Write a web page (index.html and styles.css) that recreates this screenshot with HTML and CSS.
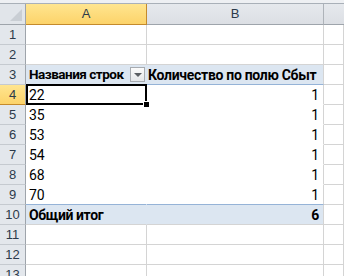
FILE: index.html
```
<html lang="ru">
<head>
  <meta charset="UTF-8">
  <title>Сводная таблица</title>
  <link rel="stylesheet" href="styles.css">
</head>
<body>
  <div class="topbar"></div>
  <div class="sheet">
    <div class="corner"><span class="tri"></span></div>
    <div class="colhead sel">A</div>
    <div class="colhead">B</div>
    <div class="colhead last"></div>

    <div class="rowhead">1</div><div class="cell"></div><div class="cell"></div><div class="cell"></div>
    <div class="rowhead">2</div><div class="cell"></div><div class="cell"></div><div class="cell"></div>

    <div class="rowhead">3</div>
    <div class="cell ph a">
      <span>Названия строк</span>
      <span class="drop"><span class="arrow"></span></span>
    </div>
    <div class="cell ph b"><span>Количество по полю Сбыт</span></div>
    <div class="cell"></div>

    <div class="rowhead sel">4</div><div class="cell pv a active">22</div><div class="cell pv b num">1</div><div class="cell"></div>
    <div class="rowhead">5</div><div class="cell pv a">35</div><div class="cell pv b num">1</div><div class="cell"></div>
    <div class="rowhead">6</div><div class="cell pv a">53</div><div class="cell pv b num">1</div><div class="cell"></div>
    <div class="rowhead">7</div><div class="cell pv a">54</div><div class="cell pv b num">1</div><div class="cell"></div>
    <div class="rowhead">8</div><div class="cell pv a">68</div><div class="cell pv b num">1</div><div class="cell"></div>
    <div class="rowhead">9</div><div class="cell pv a end">70</div><div class="cell pv b num end">1</div><div class="cell"></div>

    <div class="rowhead">10</div><div class="cell tot a">Общий итог</div><div class="cell tot b num">6</div><div class="cell"></div>

    <div class="rowhead">11</div><div class="cell"></div><div class="cell"></div><div class="cell"></div>
    <div class="rowhead">12</div><div class="cell"></div><div class="cell"></div><div class="cell"></div>
    <div class="rowhead">13</div><div class="cell"></div><div class="cell"></div><div class="cell"></div>
  </div>
</body>
</html>
```
FILE: styles.css
```
body {
  margin: 0;
  width: 344px;
  height: 276px;
  overflow: hidden;
  background: #fff;
  font-family: "Liberation Sans", Arial, sans-serif;
  font-size: 13px;
  color: #000;
}
.topbar {
  height: 3px;
  background: #eef0f3;
  border-bottom: 1px solid #a9b0b8;
}
.sheet {
  display: grid;
  grid-template-columns: 26px 121px 177px 20px;
  grid-template-rows: 21px repeat(13, 20px);
}
.sheet > div {
  box-sizing: border-box;
  border-right: 1px solid #d4d4d4;
  border-bottom: 1px solid #d4d4d4;
  white-space: nowrap;
  overflow: visible;
}
.corner {
  position: relative;
  background: #e1e5ea;
  border-right-color: #9ea4ab !important;
  border-bottom-color: #9ea4ab !important;
}
.tri {
  position: absolute;
  right: 3px;
  bottom: 3px;
  width: 0;
  height: 0;
  border-left: 12px solid transparent;
  border-bottom: 12px solid #c9ced4;
}
.colhead {
  background: linear-gradient(#e6e9ed, #dcdfe4);
  border-right-color: #aeb3b9 !important;
  border-bottom-color: #9ea4ab !important;
  text-align: center;
  line-height: 20px;
  color: #2c3a4a;
  font-size: 13px;
}
.colhead.sel {
  background: linear-gradient(#ffe58f, #fcd36a);
  border-right-color: #c48a2c !important;
  border-bottom-color: #c48a2c !important;
  color: #2c3a4a;
}
.colhead.last {
  border-right: none !important;
}
.rowhead {
  background: #e3e7ec;
  border-right-color: #9ea4ab !important;
  border-bottom-color: #c5cad0 !important;
  text-align: center;
  line-height: 20px;
  color: #2c3a4a;
  font-size: 13px;
}
.rowhead.sel {
  background: linear-gradient(#ffe58f, #fcd36a);
  border-bottom-color: #c48a2c !important;
}
.cell {
  line-height: 21px;
  padding: 0 2px;
  font-family: Roboto, "Liberation Sans", sans-serif;
  font-size: 14px;
}
.cell.a {
  padding-left: 3px;
}
.ph {
  background: #dce6f1;
  font-weight: bold;
  letter-spacing: -0.3px;
  border-bottom-color: #95b3d7 !important;
}
.ph.a {
  display: flex;
  justify-content: space-between;
  align-items: center;
  border-right-color: #dce6f1 !important;
  padding-right: 0;
  font-size: 13.5px;
  letter-spacing: -0.5px;
}
.ph.b {
  padding-left: 1px;
}
.drop {
  box-sizing: border-box;
  width: 15px;
  height: 15px;
  border: 1px solid #a7abb0;
  background: linear-gradient(#fbfbfb, #e4e6e9);
  display: flex;
  align-items: center;
  justify-content: center;
  margin-right: 1px;
}
.arrow {
  width: 0;
  height: 0;
  border-left: 4px solid transparent;
  border-right: 4px solid transparent;
  border-top: 4px solid #5a5e63;
}
.pv {
  border-bottom-color: #fff !important;
}
.pv.a {
  border-right-color: #fff !important;
}
.pv.end {
  border-bottom-color: #95b3d7 !important;
}
.num {
  text-align: right;
  padding-right: 4px;
}
.tot {
  background: #dce6f1;
  font-weight: bold;
  letter-spacing: -0.4px;
}
.tot.a {
  border-right-color: #dce6f1 !important;
}
.active {
  position: relative;
}
.active::after {
  content: "";
  position: absolute;
  top: -1px;
  left: 0;
  right: -1px;
  bottom: -1px;
  border: 2px solid #000;
}
.active::before {
  content: "";
  position: absolute;
  right: -4px;
  bottom: -4px;
  width: 5px;
  height: 5px;
  background: #000;
  border: 1px solid #fff;
  z-index: 1;
}
```
